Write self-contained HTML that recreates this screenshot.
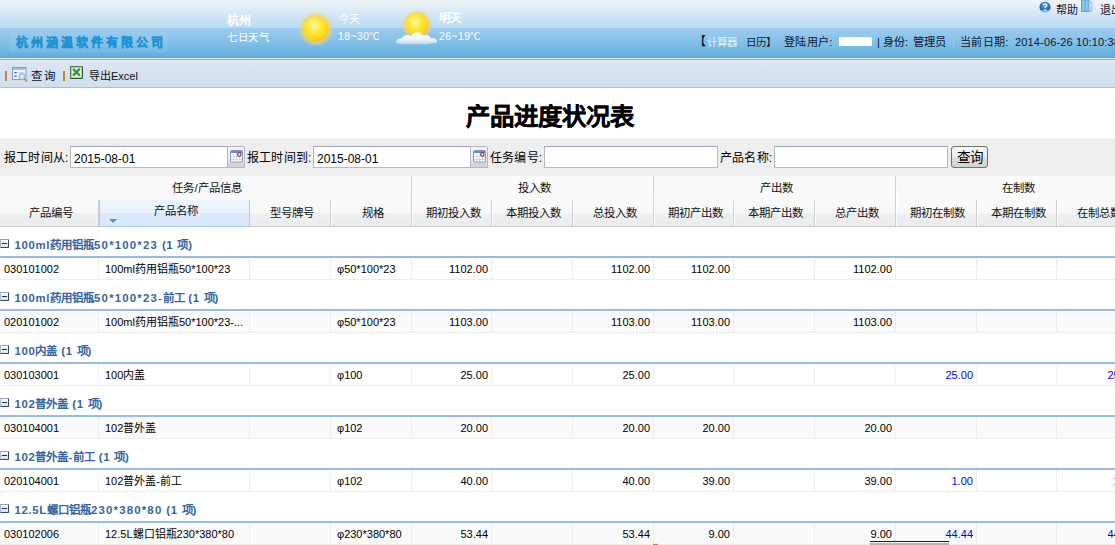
<!DOCTYPE html>
<html lang="zh-CN">
<head>
<meta charset="utf-8">
<title>产品进度状况表</title>
<style>
html,body{margin:0;padding:0;}
body{width:1115px;height:545px;overflow:hidden;position:relative;background:#fff;font-family:"Liberation Sans",sans-serif;font-size:12px;color:#000;}
div,span,i{box-sizing:border-box;}
#hdr{position:absolute;left:0;top:0;width:1115px;height:58px;background:linear-gradient(to bottom,#eff3f7 0px,#e7f1f9 5px,#d9e9f6 12px,#c9e1f4 20px,#b8daf0 28px,#9dcbee 28px,#84c0e5 42px,#5cacdf 58px);}
#l1{position:absolute;left:0;top:58px;width:1115px;height:1px;background:#e3ecf9;}
#l2{position:absolute;left:0;top:59px;width:1115px;height:1px;background:#8fb0e3;}
#tb{position:absolute;left:0;top:60px;width:1115px;height:28px;background:linear-gradient(to bottom,#e4ecf8 0px,#dbe5f4 3px,#cfdeef 27px);border-bottom:1px solid #a9bfdd;}
#logo{position:absolute;left:15.5px;top:36px;font-size:12px;line-height:14px;font-weight:bold;color:#1c93d6;letter-spacing:3.1px;-webkit-text-stroke:0.4px #1c93d6;white-space:nowrap;}
#logobg{position:absolute;left:10px;top:32px;width:158px;height:20px;background:rgba(160,215,242,0.16);box-shadow:0 0 3px rgba(160,215,242,0.16);}
.w{position:absolute;color:#fff;font-size:12px;white-space:nowrap;line-height:14px;}
.hr{position:absolute;font-size:12px;white-space:nowrap;line-height:14px;color:#0a1630;}
.tbt{position:absolute;top:68px;font-size:12px;line-height:14px;white-space:nowrap;color:#111;}
.sep{position:absolute;top:70.5px;width:1.7px;height:10.5px;background:#c8862c;}
#title{position:absolute;left:0;top:100px;width:1100px;text-align:center;-webkit-text-stroke:0.35px #000;font-size:24.4px;font-weight:bold;line-height:34px;color:#000;}
#flt{position:absolute;left:0;top:138px;width:1115px;height:38px;background:#eeeeee;}
.fl{position:absolute;top:13px;letter-spacing:0.2px;font-size:12px;line-height:14px;white-space:nowrap;color:#000;}
.fi{position:absolute;top:8px;height:22px;background:#fff;border:1px solid #b5b8c8;border-top-color:#9da3b5;font-size:12px;line-height:22px;padding-left:3px;padding-top:1px;overflow:hidden;color:#000;}
.ft{position:absolute;top:8px;width:17px;height:22px;border:1px solid #b5b8c8;border-left:0;border-radius:0 2px 0 0;background:linear-gradient(#f4f4f4 0,#eeeeee 13px,#d6d6d6 16px,#d2d2d2 22px);}
.ft svg{position:absolute;left:2px;top:3px;}
#fb{position:absolute;left:951px;top:8px;width:37px;height:22px;border:1px solid #707070;border-radius:3px;background:linear-gradient(#f5f5f5 0,#ececec 50%,#dedede 50%,#d3d3d3 100%);font-size:13.5px;line-height:21px;text-align:center;color:#000;}
#ghd{position:absolute;left:0;top:176px;width:1115px;height:51px;background:linear-gradient(to bottom,#fafafa 0,#f8f8f8 37px,#f0f0f2 37px,#eaebed 50px,#cfcfcf 50px,#cfcfcf 51px);overflow:hidden;}
.gh{position:absolute;top:0;height:50px;text-align:center;padding-left:3px;font-size:11.4px;line-height:25px;border-right:1px solid #d0d0d0;box-shadow:1px 0 0 #fdfdfd;color:#111;}
.ch{position:absolute;top:24px;height:26px;text-align:center;padding-left:3px;font-size:11.4px;line-height:26px;border-right:1px solid #d0d0d0;box-shadow:1px 0 0 #fdfdfd;color:#111;}
.ch.over{background:linear-gradient(to bottom,#edf4fd 0,#e8f1fc 13px,#dbe8fb 13px,#d9e7fb 27px);border:1px solid #aaccf6;border-top:0;height:27px;line-height:22px;box-shadow:none;padding-left:2px;}
.trg{position:absolute;left:9px;top:19px;width:0;height:0;border-left:4px solid transparent;border-right:4px solid transparent;border-top:4px solid #5b8bd0;}
#gbody{position:absolute;left:0;top:0;width:1115px;height:545px;}
.grp{position:absolute;left:0;width:1115px;height:31px;border-bottom:2px solid #99bbe8;font-size:11.4px;letter-spacing:0.65px;font-weight:bold;color:#3764a0;line-height:14px;padding:11px 0 0 14.5px;white-space:nowrap;}
.grp .col{position:absolute;left:0px;top:12px;width:9px;height:9px;border:1px solid #33486f;border-top-color:#8fa2c2;border-left-color:#a9b8d2;border-radius:1px;background:linear-gradient(#ffffff,#d8e1ef);}
.grp .col:after{content:"";position:absolute;left:1px;top:3px;width:5px;height:1px;background:#1e2f50;}
.grp b{font-size:11.5px;letter-spacing:0;}
.grp u{text-decoration:none;letter-spacing:1.2px;}
.row{position:absolute;left:0;width:1115px;height:22px;border-bottom:1px solid #ededed;background:#fff;}
.row.alt{background:#fafafa;}
.c{position:absolute;top:0;height:21px;border-right:1px solid #ededed;font-size:11px;line-height:22.4px;padding:0 5px 0 6px;white-space:nowrap;overflow:hidden;color:#000;}
.c.f{padding-left:4px;}
.c.r{text-align:right;padding-right:3px;}
.c.b{color:#0000ee;}
#mark1{position:absolute;left:870px;top:541px;width:79px;height:4px;background:linear-gradient(#1a1a1a 0,#1a1a1a 1px,#fafafa 1px,#fafafa 2px,#b4b4b4 2px,#b4b4b4 4px);}
#mark2{position:absolute;left:653px;top:544px;width:5px;height:1px;background:#f07040;}
</style>
</head>
<body>
<div id="hdr"></div><div id="l1"></div><div id="l2"></div><div id="tb"></div>
<div id="logobg"></div><div id="logo">杭州涵温软件有限公司</div>
<div class="w" style="left:227px;top:14px;font-weight:bold">杭州</div><div class="w" style="left:253px;top:15px;font-size:9px;opacity:0.45">▫</div>
<div class="w" style="left:227px;top:30px;font-size:10.5px;letter-spacing:0.5px">七日天气</div>
<svg style="position:absolute;left:296px;top:9px" width="40" height="40" viewBox="0 0 40 40"><defs><radialGradient id="gl" cx="0.5" cy="0.5" r="0.5"><stop offset="0.6" stop-color="#f8cf3a" stop-opacity="0.95"/><stop offset="0.8" stop-color="#f3d365" stop-opacity="0.7"/><stop offset="1" stop-color="#eed88a" stop-opacity="0"/></radialGradient><radialGradient id="sg" cx="0.42" cy="0.36" r="0.7"><stop offset="0" stop-color="#fff9a8"/><stop offset="0.4" stop-color="#ffe93a"/><stop offset="0.8" stop-color="#fdd21c"/><stop offset="1" stop-color="#f6bd18"/></radialGradient></defs><circle cx="20" cy="20" r="17.5" fill="url(#gl)"/><circle cx="20" cy="20" r="12.5" fill="url(#sg)"/></svg>
<div class="w" style="left:338px;top:12px;font-size:11px">今天</div>
<div class="w" style="left:338px;top:29px;font-size:10.5px;letter-spacing:0.4px">18~30℃</div>
<svg style="position:absolute;left:392px;top:5px" width="50" height="42" viewBox="0 0 50 42"><defs><linearGradient id="cl" x1="0" y1="0" x2="0" y2="1"><stop offset="0" stop-color="#ffffff"/><stop offset="0.6" stop-color="#eef3f9"/><stop offset="1" stop-color="#b9d3ee"/></linearGradient></defs><circle cx="25" cy="20" r="15.5" fill="url(#gl)"/><circle cx="25" cy="20" r="11.3" fill="url(#sg)"/><path d="M5 38.5 C2.5 36 6 33 10 33.5 C11 30 16 29 19 31 C21 26.5 29 26 31 30.5 C34 29 38 30.5 38.5 33 C43 32.5 46.5 35 44.5 37.5 C42 39.5 8 40 5 38.5 Z" fill="url(#cl)"/></svg>
<div class="w" style="left:439px;top:11px;font-weight:bold;font-size:11.5px">明天</div>
<div class="w" style="left:439px;top:29px;font-size:10.5px;letter-spacing:0.4px">26~19℃</div>
<svg style="position:absolute;left:1039px;top:1px" width="12" height="12" viewBox="0 0 12 12"><defs><radialGradient id="hg" cx="0.5" cy="0.35" r="0.65"><stop offset="0" stop-color="#7fc0ee"/><stop offset="0.5" stop-color="#2f78b8"/><stop offset="1" stop-color="#1d5a92"/></radialGradient></defs><ellipse cx="6" cy="6" rx="5.6" ry="5.2" fill="url(#hg)"/><ellipse cx="6" cy="10.2" rx="4" ry="1.5" fill="#a9d4f0" opacity="0.8"/><path d="M4.3 4.3 C4.3 2.4 7.8 2.4 7.8 4.3 C7.8 5.6 6.1 5.5 6.1 6.9" stroke="#e8f4fc" stroke-width="1.3" fill="none"/><circle cx="6.1" cy="8.6" r="0.8" fill="#e8f4fc"/></svg>
<div class="hr" style="left:1056px;top:3px;font-size:11px">帮助</div>
<svg style="position:absolute;left:1081px;top:0px" width="12" height="12" viewBox="0 0 12 12"><rect x="0.5" y="0" width="7.5" height="11.5" fill="#8cc3ea" stroke="#5f9fd4"/><rect x="3.5" y="0.5" width="1" height="11" fill="#6aa6d8"/><path d="M8 0.5 L10.8 2 V11.5 H8 Z" fill="#b4d9f2" stroke="#7eb4de" stroke-width="0.6"/><circle cx="9.6" cy="5.6" r="0.9" fill="#eaf5fc"/></svg>
<div class="hr" style="left:1099.5px;top:3px;font-size:11px">退出</div>
<div class="hr" style="left:694px;top:35px">【</div>
<div class="hr" style="left:707px;top:35px;color:#e6f1fa;font-size:10.5px">计算器</div>
<div class="hr" style="left:746px;top:35px;font-size:10.5px">日历】</div>
<div class="hr" style="left:784px;top:35px;font-size:11px;letter-spacing:0.3px">登陆用户:</div>
<div style="position:absolute;left:839px;top:37px;width:33px;height:9px;background:#fff"></div>
<div class="hr" style="left:877px;top:35px;font-size:11px">|</div>
<div class="hr" style="left:883px;top:35px;font-size:11px">身份:</div>
<div class="hr" style="left:913px;top:35px;font-size:11.3px">管理员</div>
<div class="hr" style="left:952px;top:35px;font-size:11px;color:#a9cbe8">|</div>
<div class="hr" style="left:960px;top:35px;font-size:11px;letter-spacing:0.3px">当前日期:</div>
<div class="hr" style="left:1015px;top:35px;font-size:11px;letter-spacing:0.15px">2014-06-26 10:10:38</div>
<div class="sep" style="left:5px"></div>
<svg style="position:absolute;left:12px;top:67px" width="16" height="15" viewBox="0 0 16 15"><rect x="0.5" y="0.5" width="13.5" height="12" fill="#f4f7fc" stroke="#7f9bd0"/><rect x="1" y="1" width="12.5" height="2" fill="#a4bdea"/><rect x="2.2" y="5" width="2.6" height="1.2" fill="#3c64b4"/><rect x="5.5" y="5" width="6" height="1" fill="#c9d3e6"/><rect x="2.2" y="8.6" width="2.6" height="1.2" fill="#3c64b4"/><circle cx="10" cy="9.6" r="3.1" fill="#cfe2f7" stroke="#8eabd9"/><path d="M12.4 12 L14.6 14.2" stroke="#d98a3c" stroke-width="1.7" stroke-linecap="round"/></svg>
<div class="tbt" style="left:30.5px;top:69px;word-spacing:-0.5px;font-size:11.5px">查 询</div>
<div class="sep" style="left:63px"></div>
<svg style="position:absolute;left:70px;top:66px" width="13" height="13" viewBox="0 0 13 13"><rect x="0.5" y="0.5" width="12" height="12" fill="#f3f8f1" stroke="#4a7f45"/><rect x="1.5" y="1.5" width="10" height="10" fill="none" stroke="#a8cfa4" stroke-width="1"/><path d="M3 2.8 L9.8 9.6 M9.8 2.8 L3 9.6" stroke="#2f8f3c" stroke-width="2.3"/><path d="M1 12.5 H12.5 V1" stroke="#2c5e2a" stroke-width="1" fill="none"/></svg>
<div class="tbt" style="left:89px;top:69px;font-size:11px">导出Excel</div>
<div id="title">产品进度状况表</div>
<div id="flt">
<div class="fl" style="left:4px">报工时间从:</div>
<div class="fi" style="left:70px;width:158px">2015-08-01</div>
<div class="ft" style="left:228px"><svg width="13" height="13" viewBox="0 0 13 13"><rect x="0.5" y="0.5" width="12" height="11.5" rx="1" fill="#ffffff" stroke="#7d96c4"/><rect x="1" y="1" width="11" height="2" fill="#6c8cc6"/><path d="M1 6.5H12M1 9.5H12M3.5 3.5V12M6.5 3.5V12M9.5 3.5V12" stroke="#d3d9e6" stroke-width="1"/><circle cx="9.3" cy="4.5" r="1.7" fill="#fff" stroke="#a01830" stroke-width="1.1"/></svg></div>
<div class="fl" style="left:247px">报工时间到:</div>
<div class="fi" style="left:313px;width:158px">2015-08-01</div>
<div class="ft" style="left:471px"><svg width="13" height="13" viewBox="0 0 13 13"><rect x="0.5" y="0.5" width="12" height="11.5" rx="1" fill="#ffffff" stroke="#7d96c4"/><rect x="1" y="1" width="11" height="2" fill="#6c8cc6"/><path d="M1 6.5H12M1 9.5H12M3.5 3.5V12M6.5 3.5V12M9.5 3.5V12" stroke="#d3d9e6" stroke-width="1"/><circle cx="9.3" cy="4.5" r="1.7" fill="#fff" stroke="#a01830" stroke-width="1.1"/></svg></div>
<div class="fl" style="left:490px">任务编号:</div>
<div class="fi" style="left:544px;width:174px"></div>
<div class="fl" style="left:720px">产品名称:</div>
<div class="fi" style="left:774px;width:174px"></div>
<div id="fb">查询</div>
</div>
<div id="ghd">
<div class="gh" style="left:0.0px;width:412.0px">任务/产品信息</div>
<div class="gh" style="left:412.0px;width:242.0px">投入数</div>
<div class="gh" style="left:654.0px;width:242.0px">产出数</div>
<div class="gh" style="left:896.0px;width:243.0px">在制数</div>
<div class="ch" style="left:0.0px;width:99.0px"><span>产品编号</span></div>
<div class="ch over" style="left:99.0px;width:151.0px"><span>产品名称</span><i class="trg"></i></div>
<div class="ch" style="left:250.0px;width:81.0px"><span>型号牌号</span></div>
<div class="ch" style="left:331.0px;width:81.0px"><span>规格</span></div>
<div class="ch" style="left:412.0px;width:80.0px"><span>期初投入数</span></div>
<div class="ch" style="left:492.0px;width:81.0px"><span>本期投入数</span></div>
<div class="ch" style="left:573.0px;width:81.0px"><span>总投入数</span></div>
<div class="ch" style="left:654.0px;width:80.0px"><span>期初产出数</span></div>
<div class="ch" style="left:734.0px;width:81.0px"><span>本期产出数</span></div>
<div class="ch" style="left:815.0px;width:81.0px"><span>总产出数</span></div>
<div class="ch" style="left:896.0px;width:81.0px"><span>期初在制数</span></div>
<div class="ch" style="left:977.0px;width:80.0px"><span>本期在制数</span></div>
<div class="ch" style="left:1057.0px;width:82.0px"><span>在制总数</span></div>
</div>
<div id="gbody">
<div class="grp" style="top:227px"><i class="col"></i><span>100ml<b>药用铝瓶</b><u>50*100*23</u> (1 <b>项</b>)</span></div>
<div class="row" style="top:258px">
<div class="c f" style="left:0.0px;width:99.0px">030101002</div><div class="c" style="left:99.0px;width:151.0px">100ml药用铝瓶50*100*23</div><div class="c" style="left:250.0px;width:81.0px"></div><div class="c" style="left:331.0px;width:81.0px">φ50*100*23</div><div class="c r" style="left:412.0px;width:80.0px">1102.00</div><div class="c r" style="left:492.0px;width:81.0px"></div><div class="c r" style="left:573.0px;width:81.0px">1102.00</div><div class="c r" style="left:654.0px;width:80.0px">1102.00</div><div class="c r" style="left:734.0px;width:81.0px"></div><div class="c r" style="left:815.0px;width:81.0px">1102.00</div><div class="c r b" style="left:896.0px;width:81.0px"></div><div class="c r b" style="left:977.0px;width:80.0px"></div><div class="c r b" style="left:1057.0px;width:82.0px"></div>
</div>
<div class="grp" style="top:280px"><i class="col"></i><span>100ml<b>药用铝瓶</b><u>50*100*23</u>-<b>前工</b> (1 <b>项</b>)</span></div>
<div class="row alt" style="top:311px">
<div class="c f" style="left:0.0px;width:99.0px">020101002</div><div class="c" style="left:99.0px;width:151.0px">100ml药用铝瓶50*100*23-...</div><div class="c" style="left:250.0px;width:81.0px"></div><div class="c" style="left:331.0px;width:81.0px">φ50*100*23</div><div class="c r" style="left:412.0px;width:80.0px">1103.00</div><div class="c r" style="left:492.0px;width:81.0px"></div><div class="c r" style="left:573.0px;width:81.0px">1103.00</div><div class="c r" style="left:654.0px;width:80.0px">1103.00</div><div class="c r" style="left:734.0px;width:81.0px"></div><div class="c r" style="left:815.0px;width:81.0px">1103.00</div><div class="c r b" style="left:896.0px;width:81.0px"></div><div class="c r b" style="left:977.0px;width:80.0px"></div><div class="c r b" style="left:1057.0px;width:82.0px"></div>
</div>
<div class="grp" style="top:333px"><i class="col"></i><span>100<b>内盖</b> (1 <b>项</b>)</span></div>
<div class="row" style="top:364px">
<div class="c f" style="left:0.0px;width:99.0px">030103001</div><div class="c" style="left:99.0px;width:151.0px">100内盖</div><div class="c" style="left:250.0px;width:81.0px"></div><div class="c" style="left:331.0px;width:81.0px">φ100</div><div class="c r" style="left:412.0px;width:80.0px">25.00</div><div class="c r" style="left:492.0px;width:81.0px"></div><div class="c r" style="left:573.0px;width:81.0px">25.00</div><div class="c r" style="left:654.0px;width:80.0px"></div><div class="c r" style="left:734.0px;width:81.0px"></div><div class="c r" style="left:815.0px;width:81.0px"></div><div class="c r b" style="left:896.0px;width:81.0px">25.00</div><div class="c r b" style="left:977.0px;width:80.0px"></div><div class="c r b" style="left:1057.0px;width:82.0px">25.00</div>
</div>
<div class="grp" style="top:386px"><i class="col"></i><span>102<b>普外盖</b> (1 <b>项</b>)</span></div>
<div class="row alt" style="top:417px">
<div class="c f" style="left:0.0px;width:99.0px">030104001</div><div class="c" style="left:99.0px;width:151.0px">102普外盖</div><div class="c" style="left:250.0px;width:81.0px"></div><div class="c" style="left:331.0px;width:81.0px">φ102</div><div class="c r" style="left:412.0px;width:80.0px">20.00</div><div class="c r" style="left:492.0px;width:81.0px"></div><div class="c r" style="left:573.0px;width:81.0px">20.00</div><div class="c r" style="left:654.0px;width:80.0px">20.00</div><div class="c r" style="left:734.0px;width:81.0px"></div><div class="c r" style="left:815.0px;width:81.0px">20.00</div><div class="c r b" style="left:896.0px;width:81.0px"></div><div class="c r b" style="left:977.0px;width:80.0px"></div><div class="c r b" style="left:1057.0px;width:82.0px"></div>
</div>
<div class="grp" style="top:439px"><i class="col"></i><span>102<b>普外盖</b>-<b>前工</b> (1 <b>项</b>)</span></div>
<div class="row" style="top:470px">
<div class="c f" style="left:0.0px;width:99.0px">020104001</div><div class="c" style="left:99.0px;width:151.0px">102普外盖-前工</div><div class="c" style="left:250.0px;width:81.0px"></div><div class="c" style="left:331.0px;width:81.0px">φ102</div><div class="c r" style="left:412.0px;width:80.0px">40.00</div><div class="c r" style="left:492.0px;width:81.0px"></div><div class="c r" style="left:573.0px;width:81.0px">40.00</div><div class="c r" style="left:654.0px;width:80.0px">39.00</div><div class="c r" style="left:734.0px;width:81.0px"></div><div class="c r" style="left:815.0px;width:81.0px">39.00</div><div class="c r b" style="left:896.0px;width:81.0px">1.00</div><div class="c r b" style="left:977.0px;width:80.0px"></div><div class="c r b" style="left:1057.0px;width:82.0px">1.00</div>
</div>
<div class="grp" style="top:492px"><i class="col"></i><span>12.5L<b>螺口铝瓶</b><u>230*380*80</u> (1 <b>项</b>)</span></div>
<div class="row alt" style="top:523px">
<div class="c f" style="left:0.0px;width:99.0px">030102006</div><div class="c" style="left:99.0px;width:151.0px">12.5L螺口铝瓶230*380*80</div><div class="c" style="left:250.0px;width:81.0px"></div><div class="c" style="left:331.0px;width:81.0px">φ230*380*80</div><div class="c r" style="left:412.0px;width:80.0px">53.44</div><div class="c r" style="left:492.0px;width:81.0px"></div><div class="c r" style="left:573.0px;width:81.0px">53.44</div><div class="c r" style="left:654.0px;width:80.0px">9.00</div><div class="c r" style="left:734.0px;width:81.0px"></div><div class="c r" style="left:815.0px;width:81.0px">9.00</div><div class="c r b" style="left:896.0px;width:81.0px">44.44</div><div class="c r b" style="left:977.0px;width:80.0px"></div><div class="c r b" style="left:1057.0px;width:82.0px">44.44</div>
</div>
</div>
<div id="mark1"></div><div id="mark2"></div>
</body>
</html>
